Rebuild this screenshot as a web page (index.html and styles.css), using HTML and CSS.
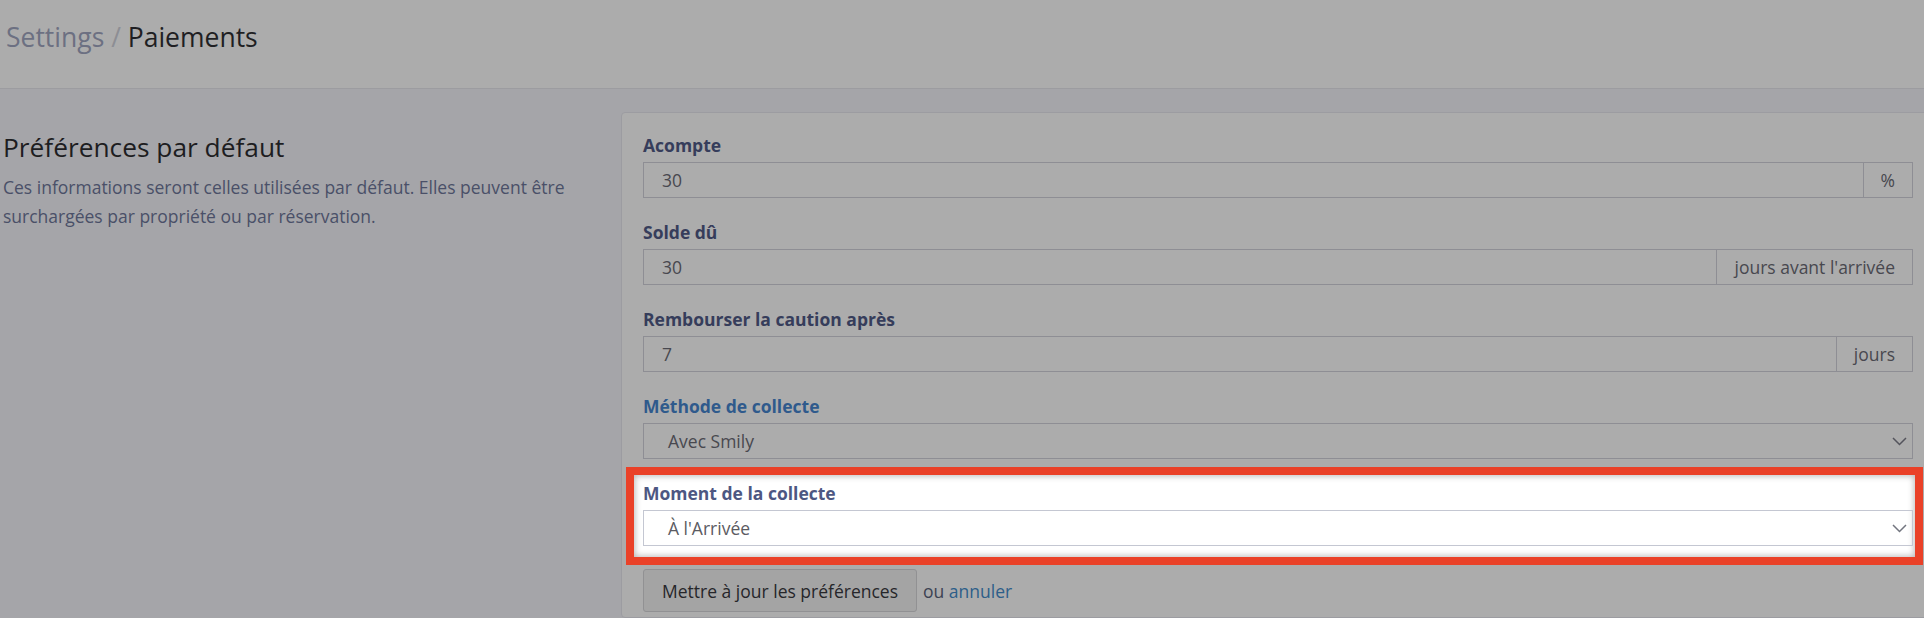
FILE: index.html
```html
<!DOCTYPE html>
<html lang="fr">
<head>
<meta charset="utf-8">
<title>Settings / Paiements</title>
<link rel="stylesheet" href="styles.css">
</head>
<body>
<header class="topbar">
  <h1 class="crumbs"><span class="crumb-parent">Settings</span> <span class="crumb-sep">/</span> <span class="crumb-current">Paiements</span></h1>
</header>
<main class="main">
  <section class="intro">
    <h2 class="intro-title">Préférences par défaut</h2>
    <p class="intro-text">Ces informations seront celles utilisées par défaut. Elles peuvent être surchargées par propriété ou par réservation.</p>
  </section>
  <section class="card">
    <div class="field">
      <div class="label">Acompte</div>
      <div class="group">
        <div class="input">30</div>
        <div class="addon addon-pct">%</div>
      </div>
    </div>
    <div class="field">
      <div class="label">Solde dû</div>
      <div class="group">
        <div class="input">30</div>
        <div class="addon">jours avant l'arrivée</div>
      </div>
    </div>
    <div class="field">
      <div class="label">Rembourser la caution après</div>
      <div class="group">
        <div class="input">7</div>
        <div class="addon">jours</div>
      </div>
    </div>
    <div class="field">
      <div class="label label-blue">Méthode de collecte</div>
      <div class="select">
        <span>Avec Smily</span>
        <svg class="chev" width="15" height="9" viewBox="0 0 15 9"><polyline points="1,1 7.5,7.5 14,1" fill="none" stroke="currentColor" stroke-width="1.5"/></svg>
      </div>
    </div>
    <div class="field highlight">
      <div class="label label-hl">Moment de la collecte</div>
      <div class="select select-hl">
        <span>À l'Arrivée</span>
        <svg class="chev" width="15" height="9" viewBox="0 0 15 9"><polyline points="1,1 7.5,7.5 14,1" fill="none" stroke="currentColor" stroke-width="1.5"/></svg>
      </div>
    </div>
    <div class="actions">
      <button class="btn" type="button">Mettre à jour les préférences</button>
      <span class="or">ou <a class="cancel" href="#">annuler</a></span>
    </div>
  </section>
</main>
</body>
</html>
```
FILE: styles.css
```css
html, body {
  margin: 0;
  padding: 0;
  overflow: hidden;
}
body {
  width: 1924px;
  height: 618px;
  background: #a5a5a9;
  font-family: "Open Sans", "DejaVu Sans", sans-serif;
  font-size: 17.5px;
  color: #2b2b30;
}
.topbar {
  height: 89px;
  box-sizing: border-box;
  background: #acacac;
  border-bottom: 1px solid #9c9ca0;
  display: flex;
  align-items: center;
  padding: 0 0 14px 6px;
}
.crumbs {
  margin: 0;
  font-size: 26.5px;
  font-weight: 400;
  line-height: 36px;
}
.crumb-parent { color: #6c7082; }
.crumb-sep { color: #8d8e94; }
.crumb-current { color: #1f1f23; }

.main {
  display: grid;
  grid-template-columns: 621px 1314px;
  padding-top: 23px;
}
.intro {
  padding: 18px 20px 0 3px;
}
.intro-title {
  margin: 0 0 9px;
  font-size: 26.3px;
  font-weight: 400;
  line-height: 34px;
  color: #1d1d21;
}
.intro-text {
  margin: 0;
  font-size: 17.5px;
  line-height: 29px;
  color: #4a5068;
}
.card {
  background: #acacac;
  border: 1px solid #9c9ca1;
  border-radius: 4px;
  padding: 20px 21px 0 21px;
  height: 506px;
  box-sizing: border-box;
}
.field {
  margin-bottom: 22px;
}
.label {
  font-weight: 700;
  line-height: 24px;
  margin-bottom: 5px;
  color: #363d5b;
}
.label-blue { color: #2f5a8c; }
.group {
  display: flex;
  height: 36px;
  border: 1px solid #8e8e94;
  box-sizing: border-box;
}
.input {
  flex: 1;
  padding-left: 18px;
  display: flex;
  align-items: center;
  color: #48484f;
}
.addon {
  border-left: 1px solid #8e8e94;
  padding: 0 17px;
  display: flex;
  align-items: center;
  color: #48484f;
}
.select {
  height: 36px;
  box-sizing: border-box;
  border: 1px solid #8e8e94;
  display: flex;
  align-items: center;
  justify-content: space-between;
  padding: 0 5px 0 24px;
  color: #48484f;
}
.chev {
  display: block;
  color: #54545c;
}
.highlight {
  margin: -6px -2px 12px -9px;
  padding: 6px 2px 11px 9px;
  background: #ffffff;
  box-shadow: 0 0 0 8px #ea4128, inset 0 0 6px 1px rgba(0, 0, 0, 0.28);
}
.label-hl { color: #4d5782; }
.select-hl {
  border-color: #c4c7d2;
  color: #5b5b62;
}
.select-hl .chev { color: #72757f; }
.actions {
  display: flex;
  align-items: center;
}
.btn {
  height: 43px;
  padding: 0 18px;
  background: #a4a4a4;
  border: 1px solid #919193;
  border-radius: 3px;
  font-family: inherit;
  font-size: 17.5px;
  color: #26262a;
}
.or {
  margin-left: 6px;
  color: #3c4252;
}
.cancel {
  color: #2d5e89;
  text-decoration: none;
}
```
